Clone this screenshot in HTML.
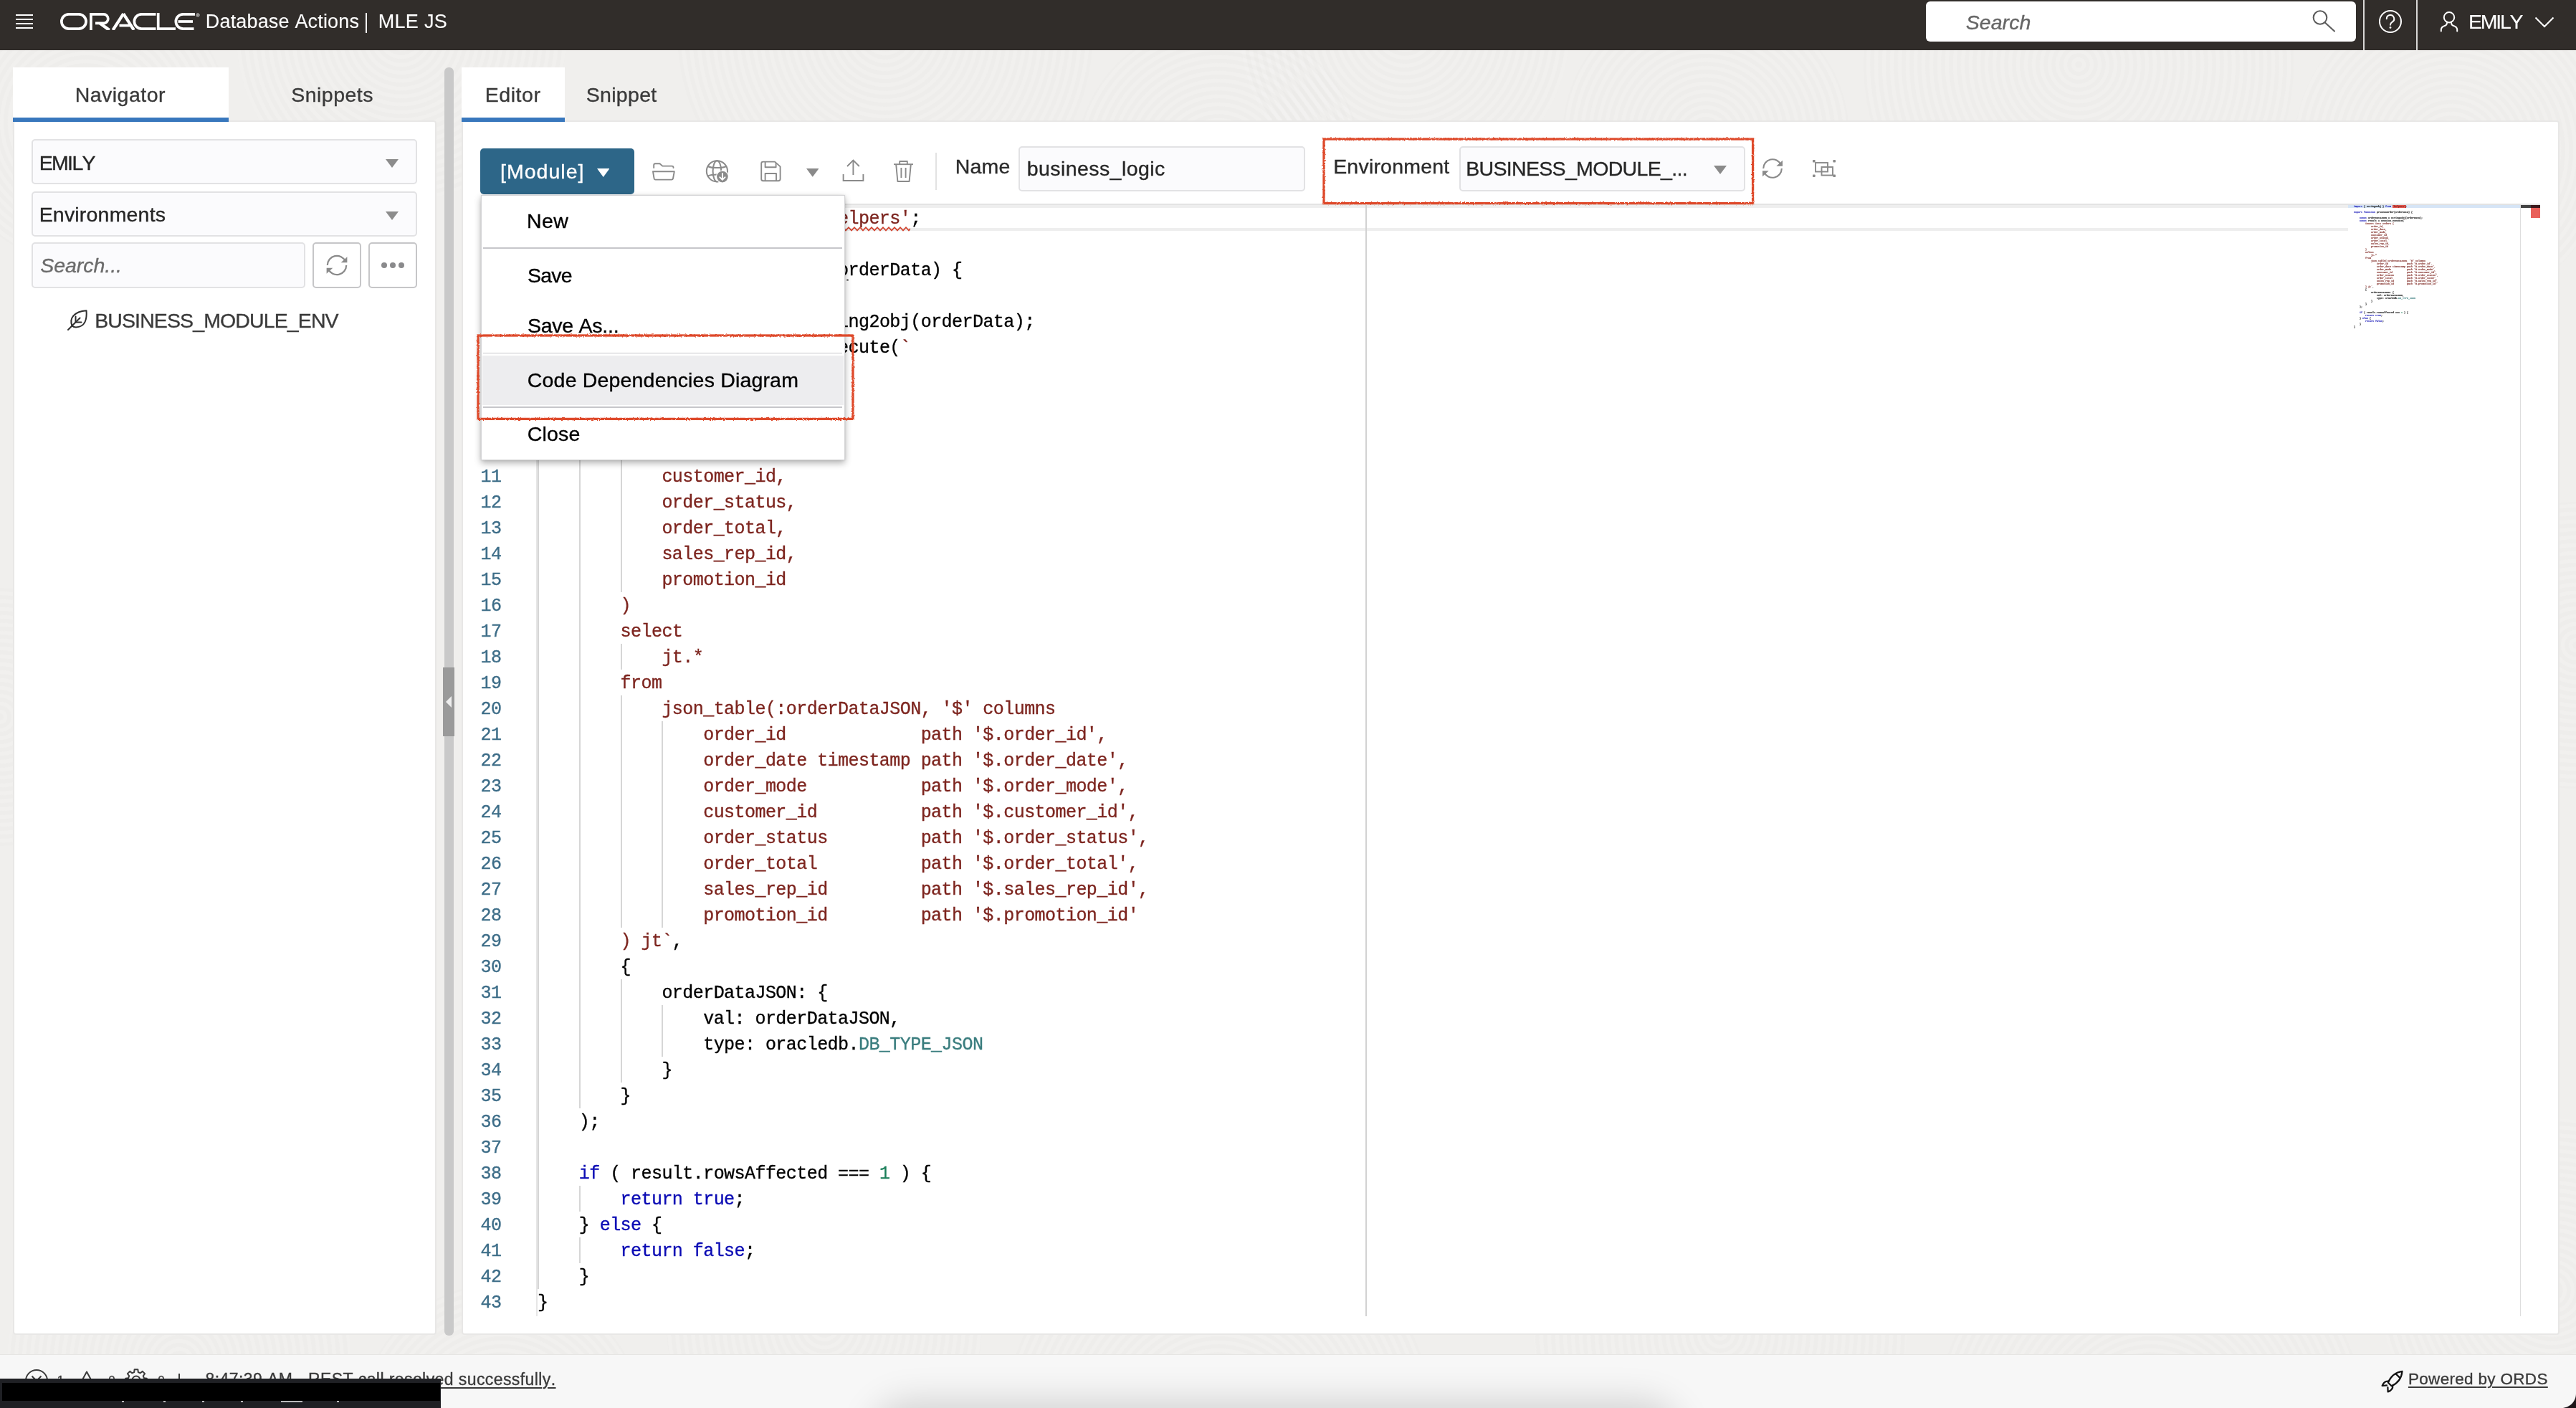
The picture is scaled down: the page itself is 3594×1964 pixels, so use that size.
<!DOCTYPE html>
<html lang="en"><head><meta charset="utf-8"><title>Database Actions | MLE JS</title>
<style>
html,body{margin:0;padding:0;}
body{width:3594px;height:1964px;overflow:hidden;background:#f0efed;font-family:"Liberation Sans",sans-serif;font-kerning:none;position:relative;}
.ring{position:absolute;border-radius:50%;background:repeating-radial-gradient(circle at center, rgba(0,0,0,0.009) 0 4px, rgba(255,255,255,0.085) 5.5px 9.5px, rgba(0,0,0,0.009) 11px);}
#app{position:absolute;left:0;top:0;width:3594px;height:1964px;will-change:transform;}
@media (max-width:1900px){body{width:1797px;height:982px;}#app{transform-origin:0 0;transform:scale(0.5);}}
.b{position:absolute;box-sizing:border-box;display:block;}
.t{position:absolute;white-space:pre;font-family:"Liberation Sans",sans-serif;-webkit-text-stroke:0.35px currentColor;}
</style></head>
<body>
<div id="app">
<div id="tex" style="position:absolute;left:0;top:0;width:3594px;height:1964px;overflow:hidden"><div class="ring" style="left:-80px;top:-30px;width:400px;height:400px"></div><div class="ring" style="left:330px;top:-180px;width:460px;height:460px"></div><div class="ring" style="left:945px;top:-245px;width:580px;height:580px"></div><div class="ring" style="left:1500px;top:30px;width:400px;height:400px"></div><div class="ring" style="left:1730px;top:-190px;width:460px;height:460px"></div><div class="ring" style="left:2180px;top:-10px;width:400px;height:400px"></div><div class="ring" style="left:2600px;top:-210px;width:600px;height:600px"></div><div class="ring" style="left:3200px;top:-10px;width:440px;height:440px"></div><div class="ring" style="left:10px;top:1660px;width:480px;height:480px"></div><div class="ring" style="left:500px;top:1790px;width:400px;height:400px"></div><div class="ring" style="left:930px;top:1630px;width:440px;height:440px"></div><div class="ring" style="left:1400px;top:1690px;width:600px;height:600px"></div><div class="ring" style="left:2140px;top:1600px;width:520px;height:520px"></div><div class="ring" style="left:2700px;top:1690px;width:600px;height:600px"></div><div class="ring" style="left:3320px;top:1560px;width:480px;height:480px"></div><div class="ring" style="left:3394px;top:700px;width:400px;height:400px"></div><div class="ring" style="left:-180px;top:820px;width:360px;height:360px"></div></div>
<!-- part_header -->
<div class="b " style="left:0.00px;top:0.00px;width:3594.00px;height:69.50px;background:#312d2a;"></div>
<div class="b " style="left:22.00px;top:20.10px;width:24.00px;height:1.80px;background:#fff;"></div>
<div class="b " style="left:22.00px;top:26.10px;width:24.00px;height:1.80px;background:#fff;"></div>
<div class="b " style="left:22.00px;top:32.10px;width:24.00px;height:1.80px;background:#fff;"></div>
<div class="b " style="left:22.00px;top:38.10px;width:24.00px;height:1.80px;background:#fff;"></div>
<svg class="b" style="left:84.00px;top:17.50px;" width="188" height="24" viewBox="0 0 188 24">
<g fill="none" stroke="#fff" stroke-width="3.7" stroke-linejoin="miter" stroke-linecap="butt">
<rect x="1.85" y="1.85" width="34.2" height="20.3" rx="10.15"/>
<path d="M42.9 24 V1.85 H60.5 a6.3 6.3 0 0 1 0 12.6 H49"/>
<path d="M55.5 14.4 L68.6 24" stroke-width="4.4"/>
<path d="M73.5 24 L88.2 1.2" stroke-width="4.2"/>
<path d="M88.2 1.2 L102.8 24" stroke-width="4.2"/>
<path d="M82.5 17.6 H97" />
<path d="M133.5 1.85 H113.5 a10.15 10.15 0 0 0 0 20.3 H133.5"/>
<path d="M136.7 0 V22.15 H161"/>
<path d="M188 1.85 H171.5 a10.15 10.15 0 0 0 0 20.3 H186.5"/>
<path d="M164.5 12 H185"/>
</g></svg>
<svg class="b" style="left:272.50px;top:17.50px;" width="6" height="6" viewBox="0 0 6 6"><circle cx="3" cy="3" r="2.2" fill="none" stroke="#fff" stroke-width="0.7"/><path d="M2.2 4.2V1.8h1a.7.7 0 0 1 0 1.4h-1m1 0l.7 1" fill="none" stroke="#fff" stroke-width="0.5"/></svg>
<span class="t " style="left:286.79px;top:16.64px;font-size:27.00px;line-height:27.00px;color:#fff;letter-spacing:0.171px;-webkit-text-stroke:0.1px #fff;">Database Actions</span>
<div class="b " style="left:510.30px;top:17.50px;width:1.80px;height:28.50px;background:#fff;"></div>
<span class="t " style="left:527.79px;top:16.64px;font-size:27.00px;line-height:27.00px;color:#fff;letter-spacing:0.286px;-webkit-text-stroke:0.1px #fff;">MLE JS</span>
<div class="b " style="left:2687.00px;top:2.00px;width:600.00px;height:56.00px;background:#fff;border-radius:6px;"></div>
<span class="t " style="left:2742.69px;top:17.07px;font-size:28.50px;line-height:28.50px;color:#666;letter-spacing:0.063px;font-style:italic;">Search</span>
<svg class="b" style="left:3222.00px;top:10.00px;" width="40" height="40" viewBox="0 0 40 40"><circle cx="15" cy="14.5" r="9.3" fill="none" stroke="#5c5c5c" stroke-width="2.1"/><path d="M21.8 21.5 L35 33.5" stroke="#5c5c5c" stroke-width="2.1" stroke-linecap="round"/></svg>
<div class="b " style="left:3297.00px;top:0.00px;width:2.00px;height:69.50px;background:#d9d8d6;"></div>
<div class="b " style="left:3371.00px;top:0.00px;width:2.00px;height:69.50px;background:#d9d8d6;"></div>
<svg class="b" style="left:3317.00px;top:12.00px;" width="36" height="36" viewBox="0 0 36 36"><circle cx="18" cy="18" r="15" fill="none" stroke="#fff" stroke-width="2"/><path d="M12.8 14.2 a5.2 5.2 0 1 1 7.6 4.6 c-1.6 1 -2.4 1.9 -2.4 3.9" fill="none" stroke="#fff" stroke-width="2" stroke-linecap="round"/><circle cx="18" cy="26.4" r="1.4" fill="#fff"/></svg>
<svg class="b" style="left:3402.00px;top:14.00px;" width="30" height="32" viewBox="0 0 30 32"><circle cx="15" cy="10.2" r="7.2" fill="none" stroke="#fff" stroke-width="2"/><path d="M3.8 29.5 v-2.2 c0 -3.2 2.4 -4.6 5.6 -5.6 c1.7 -.55 2.6 -1.4 2.6 -3.9 M26.2 29.5 v-2.2 c0 -3.2 -2.4 -4.6 -5.6 -5.6 c-1.7 -.55 -2.6 -1.4 -2.6 -3.9" fill="none" stroke="#fff" stroke-width="2" stroke-linecap="round"/></svg>
<span class="t " style="left:3443.96px;top:16.17px;font-size:28.50px;line-height:28.50px;color:#fff;letter-spacing:-2.216px;-webkit-text-stroke:0.1px #fff;">EMILY</span>
<svg class="b" style="left:3534.00px;top:20.00px;" width="32" height="22" viewBox="0 0 32 22"><path d="M3.5 4.5 L16 17 L28.5 4.5" fill="none" stroke="#fff" stroke-width="2"/></svg>
<!-- part_left -->
<div class="b " style="left:18.00px;top:94.00px;width:301.00px;height:70.00px;background:#fff;"></div>
<span class="t " style="left:104.66px;top:118.37px;font-size:28.50px;line-height:28.50px;color:#3a3a3a;letter-spacing:0.480px;">Navigator</span>
<span class="t " style="left:406.21px;top:118.37px;font-size:28.50px;line-height:28.50px;color:#3a3a3a;letter-spacing:0.488px;">Snippets</span>
<div class="b " style="left:18.00px;top:168.00px;width:591.00px;height:1694.00px;background:#fff;border:2px solid #e8e7e6;border-radius:4px;"></div>
<div class="b " style="left:18.00px;top:164.00px;width:301.00px;height:6.00px;background:#3877bd;"></div>
<div class="b " style="left:44.00px;top:194.00px;width:537.50px;height:63.00px;background:#fbfbfd;border:2px solid #e2e2e4;border-radius:5px;"></div>
<span class="t " style="left:54.66px;top:212.87px;font-size:28.50px;line-height:28.50px;color:#262626;letter-spacing:-1.641px;">EMILY</span>
<svg class="b" style="left:538.00px;top:222.00px;" width="18" height="12" viewBox="0 0 18 12"><path d="M0 0H18 L9 12Z" fill="#8c8c8c"/></svg>
<div class="b " style="left:44.00px;top:266.50px;width:537.50px;height:63.00px;background:#fbfbfd;border:2px solid #e2e2e4;border-radius:5px;"></div>
<span class="t " style="left:54.66px;top:285.37px;font-size:28.50px;line-height:28.50px;color:#262626;letter-spacing:0.193px;">Environments</span>
<svg class="b" style="left:538.00px;top:294.50px;" width="18" height="12" viewBox="0 0 18 12"><path d="M0 0H18 L9 12Z" fill="#8c8c8c"/></svg>
<div class="b " style="left:44.00px;top:337.50px;width:382.00px;height:64.00px;background:#fbfbfd;border:2px solid #e2e2e4;border-radius:5px;"></div>
<span class="t " style="left:56.19px;top:356.37px;font-size:28.50px;line-height:28.50px;color:#6b6b6b;letter-spacing:-0.032px;font-style:italic;">Search...</span>
<div class="b " style="left:436.00px;top:338.00px;width:68.00px;height:63.50px;background:#fff;border:2px solid #c6c6c8;border-radius:5px;"></div>
<svg class="b" style="left:0;top:0;overflow:visible" width="1" height="1"><path d="M456.80 370.00 A13.20 13.20 0 0 1 481.96 364.42" fill="none" stroke="#8a8a8a" stroke-width="2.2"/><path d="M483.20 370.00 A13.20 13.20 0 0 1 458.04 375.58" fill="none" stroke="#8a8a8a" stroke-width="2.2"/><path d="M484.40 358.30 L484.40 366.30 L475.70 366.30 Z" fill="#8a8a8a"/><path d="M455.60 381.70 L455.60 373.70 L464.30 373.70 Z" fill="#8a8a8a"/></svg>
<div class="b " style="left:514.00px;top:338.00px;width:68.00px;height:63.50px;background:#fff;border:2px solid #c6c6c8;border-radius:5px;"></div>
<div class="b " style="left:531.80px;top:365.80px;width:8.40px;height:8.40px;background:#8a8a8c;border-radius:50%;"></div>
<div class="b " style="left:543.80px;top:365.80px;width:8.40px;height:8.40px;background:#8a8a8c;border-radius:50%;"></div>
<div class="b " style="left:555.80px;top:365.80px;width:8.40px;height:8.40px;background:#8a8a8c;border-radius:50%;"></div>
<svg class="b" style="left:93.50px;top:431.50px;" width="30" height="30" viewBox="0 0 30 30"><g fill="none" stroke="#2e2e2e" stroke-width="2" stroke-linecap="round" stroke-linejoin="round">
<path d="M6.5 22.5 C2.5 12 9 2.5 26.5 1.2 C27.5 13 25 24 12 24.5 C9.8 24.5 8 23.8 6.5 22.5 Z"/>
<path d="M1 28 L17.5 11.5"/>
<path d="M11.5 17.5 V9.5"/>
<path d="M11.5 17.5 H19.5"/>
</g></svg>
<span class="t " style="left:132.16px;top:432.87px;font-size:28.50px;line-height:28.50px;color:#3a3a3a;letter-spacing:-0.883px;">BUSINESS_MODULE_ENV</span>
<div class="b " style="left:620.00px;top:94.00px;width:12.50px;height:1769.00px;background:#c9c9c9;border-radius:6px;"></div>
<div class="b " style="left:618.20px;top:931.00px;width:15.80px;height:95.70px;background:#9a9a9a;"></div>
<svg class="b" style="left:622.00px;top:971.00px;" width="8" height="16" viewBox="0 0 8 16"><path d="M8 0 L0 8 L8 16Z" fill="#ededed"/></svg>
<!-- part_editor -->
<div class="b " style="left:644.00px;top:94.00px;width:144.00px;height:70.00px;background:#fff;"></div>
<span class="t " style="left:676.66px;top:118.37px;font-size:28.50px;line-height:28.50px;color:#3a3a3a;letter-spacing:0.572px;">Editor</span>
<span class="t " style="left:817.71px;top:118.37px;font-size:28.50px;line-height:28.50px;color:#3a3a3a;letter-spacing:0.307px;">Snippet</span>
<div class="b " style="left:644.00px;top:168.00px;width:2926.50px;height:1694.00px;background:#fff;border:2px solid #e8e7e6;border-radius:4px;"></div>
<div class="b " style="left:644.00px;top:164.00px;width:144.00px;height:6.00px;background:#3877bd;"></div>
<div class="b " style="left:670.00px;top:207.00px;width:215.00px;height:64.00px;background:#2d6688;border-radius:5px;"></div>
<span class="t " style="left:697.97px;top:224.87px;font-size:28.50px;line-height:28.50px;color:#fff;letter-spacing:1.036px;">[Module]</span>
<svg class="b" style="left:832.50px;top:235.00px;" width="17.5" height="12" viewBox="0 0 17.5 12"><path d="M0 0H17.5 L8.75 12Z" fill="#fff"/></svg>
<svg class="b" style="left:906.00px;top:222.00px;" width="40" height="34" viewBox="0 0 40 34"><g fill="none" stroke="#8a8a8a" stroke-width="1.9" stroke-linejoin="round" stroke-linecap="round"><path d="M6.2 12 V8.2 a2 2 0 0 1 2 -2 H14.5 L18.3 9.6 H31.5 a2 2 0 0 1 2 2 V12"/><path d="M5 17.3 H34.8 L33 27 a2 2 0 0 1 -2 1.6 H8.6 a2 2 0 0 1 -2 -1.6 Z"/></g></svg>
<svg class="b" style="left:982.00px;top:220.00px;" width="38" height="38" viewBox="0 0 38 38"><g fill="none" stroke="#8a8a8a" stroke-width="2">
<circle cx="18.4" cy="18.8" r="14.6"/>
<ellipse cx="18.4" cy="18.8" rx="5.8" ry="14.6"/>
<path d="M5.5 12 C11 14.8 25.5 14.8 31.3 12"/>
<path d="M5.5 25.6 C11 22.8 25.5 22.8 31.3 25.6"/>
</g>
<circle cx="25.9" cy="26.6" r="9" fill="#fff"/>
<circle cx="25.9" cy="26.6" r="7.8" fill="#8a8a8a"/>
<path d="M25.9 22 V30.6 M22.2 27.2 L25.9 30.9 L29.6 27.2" fill="none" stroke="#fff" stroke-width="1.9" stroke-linecap="round" stroke-linejoin="round"/></svg>
<svg class="b" style="left:1060.00px;top:223.00px;" width="31" height="32" viewBox="0 0 31 32"><g fill="none" stroke="#8a8a8a" stroke-width="1.9" stroke-linejoin="round">
<path d="M4.6 2.6 H21 L28.6 9.4 V26.8 a2.4 2.4 0 0 1 -2.4 2.4 H4.6 a2.4 2.4 0 0 1 -2.4 -2.4 V5 a2.4 2.4 0 0 1 2.4 -2.4 Z"/>
<path d="M7.6 2.6 V10.2 H22.6 V4"/>
<path d="M7.6 29 V19 H23 V29"/>
</g></svg>
<svg class="b" style="left:1124.50px;top:235.00px;" width="17.5" height="11.8" viewBox="0 0 17.5 11.8"><path d="M0 0H17.5 L8.75 11.8Z" fill="#8a8a8a"/></svg>
<svg class="b" style="left:1174.00px;top:222.00px;" width="33" height="32" viewBox="0 0 33 32"><g fill="none" stroke="#8a8a8a" stroke-width="1.9"><path d="M16.4 1.6 V22"/><path d="M8 10 L16.4 1.6 L24.8 10"/><path d="M2.6 21 V30 H30.4 V21"/></g></svg>
<svg class="b" style="left:1246.00px;top:223.00px;" width="29" height="32" viewBox="0 0 29 32"><g fill="none" stroke="#8a8a8a" stroke-width="1.9" stroke-linejoin="round"><path d="M1 6.2 H28"/><path d="M9.2 6 V2 H19.8 V6"/><path d="M4.2 6.4 L6.4 30 H22.6 L24.8 6.4"/><path d="M11.4 11 V25 M17.6 11 V25"/></g></svg>
<div class="b " style="left:1305.20px;top:213.00px;width:1.80px;height:52.00px;background:#e2e2e2;"></div>
<span class="t " style="left:1332.66px;top:217.87px;font-size:28.50px;line-height:28.50px;color:#2b2b2b;letter-spacing:0.194px;">Name</span>
<div class="b " style="left:1421.00px;top:203.50px;width:399.50px;height:63.00px;background:#fbfbfd;border:2px solid #e2e2e4;border-radius:5px;"></div>
<span class="t " style="left:1432.66px;top:221.17px;font-size:28.50px;line-height:28.50px;color:#262626;letter-spacing:0.434px;">business_logic</span>
<span class="t " style="left:1860.16px;top:217.87px;font-size:28.50px;line-height:28.50px;color:#2b2b2b;letter-spacing:0.205px;">Environment</span>
<div class="b " style="left:2035.50px;top:203.50px;width:399.50px;height:63.00px;background:#fbfbfd;border:2px solid #e2e2e4;border-radius:5px;"></div>
<span class="t " style="left:2045.16px;top:221.37px;font-size:28.50px;line-height:28.50px;color:#262626;letter-spacing:-0.671px;">BUSINESS_MODULE_...</span>
<svg class="b" style="left:2391.00px;top:231.00px;" width="18" height="12" viewBox="0 0 18 12"><path d="M0 0H18 L9 12Z" fill="#8a8a8a"/></svg>
<svg class="b" style="left:0;top:0;overflow:visible" width="1" height="1"><path d="M2460.20 235.00 A12.80 12.80 0 0 1 2484.60 229.59" fill="none" stroke="#8a8a8a" stroke-width="2.1"/><path d="M2485.80 235.00 A12.80 12.80 0 0 1 2461.40 240.41" fill="none" stroke="#8a8a8a" stroke-width="2.1"/><path d="M2487.00 223.70 L2487.00 231.70 L2478.30 231.70 Z" fill="#8a8a8a"/><path d="M2459.00 246.30 L2459.00 238.30 L2467.70 238.30 Z" fill="#8a8a8a"/></svg>
<svg class="b" style="left:2529.00px;top:223.00px;" width="32" height="24" viewBox="0 0 32 24"><g fill="none" stroke="#8a8a8a" stroke-width="1.9"><rect x="4" y="4" width="17" height="12.5"/><rect x="12.5" y="10" width="15.5" height="11.5"/></g>
<g fill="#8a8a8a"><rect x="0" y="0" width="3.6" height="3.6" rx="0.8"/><rect x="28.4" y="0" width="3.6" height="3.6" rx="0.8"/><rect x="0" y="20.4" width="3.6" height="3.6" rx="0.8"/><rect x="28.4" y="20.4" width="3.6" height="3.6" rx="0.8"/></g></svg>
<!-- part_code -->
<div class="b " style="left:671.00px;top:284.00px;width:2873.00px;height:2.00px;background:#e3e3e3;"></div>
<div class="b " style="left:750.00px;top:286.00px;width:2526.00px;height:4.00px;background:#eeeeee;"></div>
<div class="b " style="left:750.00px;top:318.00px;width:2526.00px;height:4.00px;background:#eeeeee;"></div>
<div class="b " style="left:748.00px;top:286.00px;width:2.00px;height:1550.00px;background:#e6e6e6;"></div>
<div class="b " style="left:1905.40px;top:286.00px;width:2.00px;height:1550.00px;background:#d2d2d2;"></div>
<div class="b " style="left:750.00px;top:430.00px;width:2.00px;height:1368.00px;background:#d6d6d6;"></div>
<div class="b " style="left:807.80px;top:502.00px;width:2.00px;height:1044.00px;background:#d6d6d6;"></div>
<div class="b " style="left:807.80px;top:1654.00px;width:2.00px;height:36.00px;background:#d6d6d6;"></div>
<div class="b " style="left:807.80px;top:1726.00px;width:2.00px;height:36.00px;background:#d6d6d6;"></div>
<div class="b " style="left:865.60px;top:538.00px;width:2.00px;height:288.00px;background:#d6d6d6;"></div>
<div class="b " style="left:865.60px;top:898.00px;width:2.00px;height:36.00px;background:#d6d6d6;"></div>
<div class="b " style="left:865.60px;top:970.00px;width:2.00px;height:324.00px;background:#d6d6d6;"></div>
<div class="b " style="left:865.60px;top:1366.00px;width:2.00px;height:144.00px;background:#d6d6d6;"></div>
<div class="b " style="left:923.40px;top:1006.00px;width:2.00px;height:288.00px;background:#d6d6d6;"></div>
<div class="b " style="left:923.40px;top:1402.00px;width:2.00px;height:72.00px;background:#d6d6d6;"></div>
<style>.c{font-family:"Liberation Mono",monospace;font-size:25.00px;line-height:25.00px;letter-spacing:-0.5524px;color:#000;}</style>
<span class="t c" style="left:684.95px;top:292.75px;color:#3d6d88;">1</span>
<span class="t c" style="left:750.00px;top:292.75px;"><span style="color:#0b0bb4">import</span> { string2obj } <span style="color:#0b0bb4">from</span> <span style="color:#7d251f">&#x27;helpers&#x27;</span>;</span>
<span class="t c" style="left:684.95px;top:328.75px;color:#3d6d88;">2</span>
<span class="t c" style="left:684.95px;top:364.75px;color:#3d6d88;">3</span>
<span class="t c" style="left:750.00px;top:364.75px;"><span style="color:#0b0bb4">export</span> <span style="color:#0b0bb4">function</span> processOrder(orderData) {</span>
<span class="t c" style="left:684.95px;top:400.75px;color:#3d6d88;">4</span>
<span class="t c" style="left:684.95px;top:436.75px;color:#3d6d88;">5</span>
<span class="t c" style="left:750.00px;top:436.75px;">    <span style="color:#0b0bb4">const</span> orderDataJSON = string2obj(orderData);</span>
<span class="t c" style="left:684.95px;top:472.75px;color:#3d6d88;">6</span>
<span class="t c" style="left:750.00px;top:472.75px;">    <span style="color:#0b0bb4">const</span> result = session.execute(<span style="color:#7d251f">`</span></span>
<span class="t c" style="left:684.95px;top:508.75px;color:#3d6d88;">7</span>
<span class="t c" style="left:750.00px;top:508.75px;"><span style="color:#7d251f">        insert into orders (</span></span>
<span class="t c" style="left:684.95px;top:544.75px;color:#3d6d88;">8</span>
<span class="t c" style="left:750.00px;top:544.75px;"><span style="color:#7d251f">            order_id,</span></span>
<span class="t c" style="left:684.95px;top:580.75px;color:#3d6d88;">9</span>
<span class="t c" style="left:750.00px;top:580.75px;"><span style="color:#7d251f">            order_date,</span></span>
<span class="t c" style="left:670.50px;top:616.75px;color:#3d6d88;">10</span>
<span class="t c" style="left:750.00px;top:616.75px;"><span style="color:#7d251f">            order_mode,</span></span>
<span class="t c" style="left:670.50px;top:652.75px;color:#3d6d88;">11</span>
<span class="t c" style="left:750.00px;top:652.75px;"><span style="color:#7d251f">            customer_id,</span></span>
<span class="t c" style="left:670.50px;top:688.75px;color:#3d6d88;">12</span>
<span class="t c" style="left:750.00px;top:688.75px;"><span style="color:#7d251f">            order_status,</span></span>
<span class="t c" style="left:670.50px;top:724.75px;color:#3d6d88;">13</span>
<span class="t c" style="left:750.00px;top:724.75px;"><span style="color:#7d251f">            order_total,</span></span>
<span class="t c" style="left:670.50px;top:760.75px;color:#3d6d88;">14</span>
<span class="t c" style="left:750.00px;top:760.75px;"><span style="color:#7d251f">            sales_rep_id,</span></span>
<span class="t c" style="left:670.50px;top:796.75px;color:#3d6d88;">15</span>
<span class="t c" style="left:750.00px;top:796.75px;"><span style="color:#7d251f">            promotion_id</span></span>
<span class="t c" style="left:670.50px;top:832.75px;color:#3d6d88;">16</span>
<span class="t c" style="left:750.00px;top:832.75px;"><span style="color:#7d251f">        )</span></span>
<span class="t c" style="left:670.50px;top:868.75px;color:#3d6d88;">17</span>
<span class="t c" style="left:750.00px;top:868.75px;"><span style="color:#7d251f">        select</span></span>
<span class="t c" style="left:670.50px;top:904.75px;color:#3d6d88;">18</span>
<span class="t c" style="left:750.00px;top:904.75px;"><span style="color:#7d251f">            jt.*</span></span>
<span class="t c" style="left:670.50px;top:940.75px;color:#3d6d88;">19</span>
<span class="t c" style="left:750.00px;top:940.75px;"><span style="color:#7d251f">        from</span></span>
<span class="t c" style="left:670.50px;top:976.75px;color:#3d6d88;">20</span>
<span class="t c" style="left:750.00px;top:976.75px;"><span style="color:#7d251f">            json_table(:orderDataJSON, &#x27;$&#x27; columns</span></span>
<span class="t c" style="left:670.50px;top:1012.75px;color:#3d6d88;">21</span>
<span class="t c" style="left:750.00px;top:1012.75px;"><span style="color:#7d251f">                order_id             path &#x27;$.order_id&#x27;,</span></span>
<span class="t c" style="left:670.50px;top:1048.75px;color:#3d6d88;">22</span>
<span class="t c" style="left:750.00px;top:1048.75px;"><span style="color:#7d251f">                order_date timestamp path &#x27;$.order_date&#x27;,</span></span>
<span class="t c" style="left:670.50px;top:1084.75px;color:#3d6d88;">23</span>
<span class="t c" style="left:750.00px;top:1084.75px;"><span style="color:#7d251f">                order_mode           path &#x27;$.order_mode&#x27;,</span></span>
<span class="t c" style="left:670.50px;top:1120.75px;color:#3d6d88;">24</span>
<span class="t c" style="left:750.00px;top:1120.75px;"><span style="color:#7d251f">                customer_id          path &#x27;$.customer_id&#x27;,</span></span>
<span class="t c" style="left:670.50px;top:1156.75px;color:#3d6d88;">25</span>
<span class="t c" style="left:750.00px;top:1156.75px;"><span style="color:#7d251f">                order_status         path &#x27;$.order_status&#x27;,</span></span>
<span class="t c" style="left:670.50px;top:1192.75px;color:#3d6d88;">26</span>
<span class="t c" style="left:750.00px;top:1192.75px;"><span style="color:#7d251f">                order_total          path &#x27;$.order_total&#x27;,</span></span>
<span class="t c" style="left:670.50px;top:1228.75px;color:#3d6d88;">27</span>
<span class="t c" style="left:750.00px;top:1228.75px;"><span style="color:#7d251f">                sales_rep_id         path &#x27;$.sales_rep_id&#x27;,</span></span>
<span class="t c" style="left:670.50px;top:1264.75px;color:#3d6d88;">28</span>
<span class="t c" style="left:750.00px;top:1264.75px;"><span style="color:#7d251f">                promotion_id         path &#x27;$.promotion_id&#x27;</span></span>
<span class="t c" style="left:670.50px;top:1300.75px;color:#3d6d88;">29</span>
<span class="t c" style="left:750.00px;top:1300.75px;"><span style="color:#7d251f">        ) jt`</span>,</span>
<span class="t c" style="left:670.50px;top:1336.75px;color:#3d6d88;">30</span>
<span class="t c" style="left:750.00px;top:1336.75px;">        {</span>
<span class="t c" style="left:670.50px;top:1372.75px;color:#3d6d88;">31</span>
<span class="t c" style="left:750.00px;top:1372.75px;">            orderDataJSON: {</span>
<span class="t c" style="left:670.50px;top:1408.75px;color:#3d6d88;">32</span>
<span class="t c" style="left:750.00px;top:1408.75px;">                val: orderDataJSON,</span>
<span class="t c" style="left:670.50px;top:1444.75px;color:#3d6d88;">33</span>
<span class="t c" style="left:750.00px;top:1444.75px;">                type: oracledb.<span style="color:#3a7d7e">DB_TYPE_JSON</span></span>
<span class="t c" style="left:670.50px;top:1480.75px;color:#3d6d88;">34</span>
<span class="t c" style="left:750.00px;top:1480.75px;">            }</span>
<span class="t c" style="left:670.50px;top:1516.75px;color:#3d6d88;">35</span>
<span class="t c" style="left:750.00px;top:1516.75px;">        }</span>
<span class="t c" style="left:670.50px;top:1552.75px;color:#3d6d88;">36</span>
<span class="t c" style="left:750.00px;top:1552.75px;">    );</span>
<span class="t c" style="left:670.50px;top:1588.75px;color:#3d6d88;">37</span>
<span class="t c" style="left:670.50px;top:1624.75px;color:#3d6d88;">38</span>
<span class="t c" style="left:750.00px;top:1624.75px;">    <span style="color:#0b0bb4">if</span> ( result.rowsAffected === <span style="color:#1b7f5a">1</span> ) {</span>
<span class="t c" style="left:670.50px;top:1660.75px;color:#3d6d88;">39</span>
<span class="t c" style="left:750.00px;top:1660.75px;">        <span style="color:#0b0bb4">return</span> <span style="color:#0b0bb4">true</span>;</span>
<span class="t c" style="left:670.50px;top:1696.75px;color:#3d6d88;">40</span>
<span class="t c" style="left:750.00px;top:1696.75px;">    } <span style="color:#0b0bb4">else</span> {</span>
<span class="t c" style="left:670.50px;top:1732.75px;color:#3d6d88;">41</span>
<span class="t c" style="left:750.00px;top:1732.75px;">        <span style="color:#0b0bb4">return</span> <span style="color:#0b0bb4">false</span>;</span>
<span class="t c" style="left:670.50px;top:1768.75px;color:#3d6d88;">42</span>
<span class="t c" style="left:750.00px;top:1768.75px;">    }</span>
<span class="t c" style="left:670.50px;top:1804.75px;color:#3d6d88;">43</span>
<span class="t c" style="left:750.00px;top:1804.75px;">}</span>
<svg class="b" style="left:1140.15px;top:315.50px;" width="130.05" height="7" viewBox="0 0 130.05 7"><path d="M0 5.5 L4.0 1.2 L8.0 5.5 L12.0 1.2 L16.0 5.5 L20.0 1.2 L24.0 5.5 L28.0 1.2 L32.0 5.5 L36.0 1.2 L40.0 5.5 L44.0 1.2 L48.0 5.5 L52.0 1.2 L56.0 5.5 L60.0 1.2 L64.0 5.5 L68.0 1.2 L72.0 5.5 L76.0 1.2 L80.0 5.5 L84.0 1.2 L88.0 5.5 L92.0 1.2 L96.0 5.5 L100.0 1.2 L104.0 5.5 L108.0 1.2 L112.0 5.5 L116.0 1.2 L120.0 5.5 L124.0 1.2 L128.0 5.5 L132.0 1.2" fill="none" stroke="#d1402c" stroke-width="1.7"/></svg>
<div class="b " style="left:1169.40px;top:388.60px;width:3.20px;height:3.20px;background:#7a7a7a;border-radius:50%;"></div>
<div class="b " style="left:1175.30px;top:388.60px;width:3.20px;height:3.20px;background:#7a7a7a;border-radius:50%;"></div>
<div class="b " style="left:1181.20px;top:388.60px;width:3.20px;height:3.20px;background:#7a7a7a;border-radius:50%;"></div>
<div class="b " style="left:3276.00px;top:286.00px;width:240.50px;height:4.00px;background:#d6e5f6;"></div>
<div class="b " style="left:3338.00px;top:286.40px;width:18.50px;height:3.40px;background:#e4574f;"></div>
<div class="b" style="left:3284.0px;top:286.0px;width:1700px;transform-origin:0 0;transform:scale(0.13889);font-family:'Liberation Mono',monospace;font-weight:bold;font-size:24px;line-height:28.8px;white-space:pre;color:#000;-webkit-text-stroke:1.4px currentColor;opacity:0.8;"><div style="height:28.8px"><span style="color:#0b0bb4">import</span> { string2obj } <span style="color:#0b0bb4">from</span> <span style="color:#7d251f">&#x27;helpers&#x27;</span>;</div><div style="height:28.8px"></div><div style="height:28.8px"><span style="color:#0b0bb4">export</span> <span style="color:#0b0bb4">function</span> processOrder(orderData) {</div><div style="height:28.8px"></div><div style="height:28.8px">    <span style="color:#0b0bb4">const</span> orderDataJSON = string2obj(orderData);</div><div style="height:28.8px">    <span style="color:#0b0bb4">const</span> result = session.execute(<span style="color:#7d251f">`</span></div><div style="height:28.8px"><span style="color:#7d251f">        insert into orders (</span></div><div style="height:28.8px"><span style="color:#7d251f">            order_id,</span></div><div style="height:28.8px"><span style="color:#7d251f">            order_date,</span></div><div style="height:28.8px"><span style="color:#7d251f">            order_mode,</span></div><div style="height:28.8px"><span style="color:#7d251f">            customer_id,</span></div><div style="height:28.8px"><span style="color:#7d251f">            order_status,</span></div><div style="height:28.8px"><span style="color:#7d251f">            order_total,</span></div><div style="height:28.8px"><span style="color:#7d251f">            sales_rep_id,</span></div><div style="height:28.8px"><span style="color:#7d251f">            promotion_id</span></div><div style="height:28.8px"><span style="color:#7d251f">        )</span></div><div style="height:28.8px"><span style="color:#7d251f">        select</span></div><div style="height:28.8px"><span style="color:#7d251f">            jt.*</span></div><div style="height:28.8px"><span style="color:#7d251f">        from</span></div><div style="height:28.8px"><span style="color:#7d251f">            json_table(:orderDataJSON, &#x27;$&#x27; columns</span></div><div style="height:28.8px"><span style="color:#7d251f">                order_id             path &#x27;$.order_id&#x27;,</span></div><div style="height:28.8px"><span style="color:#7d251f">                order_date timestamp path &#x27;$.order_date&#x27;,</span></div><div style="height:28.8px"><span style="color:#7d251f">                order_mode           path &#x27;$.order_mode&#x27;,</span></div><div style="height:28.8px"><span style="color:#7d251f">                customer_id          path &#x27;$.customer_id&#x27;,</span></div><div style="height:28.8px"><span style="color:#7d251f">                order_status         path &#x27;$.order_status&#x27;,</span></div><div style="height:28.8px"><span style="color:#7d251f">                order_total          path &#x27;$.order_total&#x27;,</span></div><div style="height:28.8px"><span style="color:#7d251f">                sales_rep_id         path &#x27;$.sales_rep_id&#x27;,</span></div><div style="height:28.8px"><span style="color:#7d251f">                promotion_id         path &#x27;$.promotion_id&#x27;</span></div><div style="height:28.8px"><span style="color:#7d251f">        ) jt`</span>,</div><div style="height:28.8px">        {</div><div style="height:28.8px">            orderDataJSON: {</div><div style="height:28.8px">                val: orderDataJSON,</div><div style="height:28.8px">                type: oracledb.<span style="color:#3a7d7e">DB_TYPE_JSON</span></div><div style="height:28.8px">            }</div><div style="height:28.8px">        }</div><div style="height:28.8px">    );</div><div style="height:28.8px"></div><div style="height:28.8px">    <span style="color:#0b0bb4">if</span> ( result.rowsAffected === <span style="color:#1b7f5a">1</span> ) {</div><div style="height:28.8px">        <span style="color:#0b0bb4">return</span> <span style="color:#0b0bb4">true</span>;</div><div style="height:28.8px">    } <span style="color:#0b0bb4">else</span> {</div><div style="height:28.8px">        <span style="color:#0b0bb4">return</span> <span style="color:#0b0bb4">false</span>;</div><div style="height:28.8px">    }</div><div style="height:28.8px">}</div></div>
<div class="b " style="left:3516.00px;top:286.00px;width:1.20px;height:1550.00px;background:#dedede;"></div>
<div class="b " style="left:3517.20px;top:286.00px;width:26.80px;height:4.00px;background:#424242;"></div>
<div class="b " style="left:3530.50px;top:290.00px;width:13.50px;height:14.00px;background:#e9605a;"></div>
<div class="b " style="left:3530.50px;top:286.00px;width:13.50px;height:4.00px;background:#3b181c;"></div>
<!-- part_menu -->
<div class="b " style="left:671.00px;top:272.00px;width:507.50px;height:369.50px;background:#fff;border:1.5px solid #d4d4d6;box-shadow:0 4px 9px rgba(0,0,0,0.30), 0 0 3px rgba(0,0,0,0.12);"></div>
<div class="b " style="left:672.50px;top:495.50px;width:504.50px;height:69.50px;background:#ededef;"></div>
<div class="b " style="left:674.00px;top:345.10px;width:501.00px;height:1.80px;background:#c6c6ca;"></div>
<div class="b " style="left:674.00px;top:491.60px;width:501.00px;height:1.80px;background:#c6c6ca;"></div>
<div class="b " style="left:674.00px;top:567.10px;width:501.00px;height:1.80px;background:#c6c6ca;"></div>
<span class="t " style="left:734.96px;top:293.87px;font-size:28.50px;line-height:28.50px;color:#000;letter-spacing:0.477px;">New</span>
<span class="t " style="left:736.01px;top:369.67px;font-size:28.50px;line-height:28.50px;color:#000;letter-spacing:-0.800px;">Save</span>
<span class="t " style="left:736.01px;top:439.87px;font-size:28.50px;line-height:28.50px;color:#000;letter-spacing:-0.255px;">Save As...</span>
<span class="t " style="left:735.85px;top:515.87px;font-size:28.50px;line-height:28.50px;color:#000;letter-spacing:0.173px;">Code Dependencies Diagram</span>
<span class="t " style="left:735.85px;top:591.37px;font-size:28.50px;line-height:28.50px;color:#000;letter-spacing:0.137px;">Close</span>
<svg class="b" style="left:661.30px;top:461.80px;" width="535" height="128.4" viewBox="0 0 535 128.4"><filter id="rr1" x="-5%" y="-5%" width="110%" height="110%"><feTurbulence type="fractalNoise" baseFrequency="0.45" numOctaves="2" seed="2" result="n"/><feDisplacementMap in="SourceGraphic" in2="n" scale="3" xChannelSelector="R" yChannelSelector="G"/></filter><rect x="6" y="6" width="523.0" height="116.4" fill="none" stroke="#de4a2b" stroke-width="3.3" filter="url(#rr1)"/></svg>
<svg class="b" style="left:1840.70px;top:187.70px;" width="610.6" height="101.6" viewBox="0 0 610.6 101.6"><filter id="rr2" x="-5%" y="-5%" width="110%" height="110%"><feTurbulence type="fractalNoise" baseFrequency="0.45" numOctaves="2" seed="5" result="n"/><feDisplacementMap in="SourceGraphic" in2="n" scale="3" xChannelSelector="R" yChannelSelector="G"/></filter><rect x="6" y="6" width="598.6" height="89.6" fill="none" stroke="#de4a2b" stroke-width="3.3" filter="url(#rr2)"/></svg>
<!-- part_status -->
<div class="b " style="left:0.00px;top:1889.00px;width:3594.00px;height:75.00px;background:#f7f7f7;border-top:1.5px solid #e6e5e3;"></div>
<div class="b " style="left:1240.00px;top:1978.00px;width:1080.00px;height:80.00px;background:#bbb;border-radius:30px;box-shadow:0 0 50px 24px rgba(0,0,0,0.15);"></div>
<svg class="b" style="left:34.00px;top:1909.00px;" width="34" height="34" viewBox="0 0 34 34"><circle cx="17" cy="17" r="15" fill="none" stroke="#3a3a3a" stroke-width="2"/><path d="M10.5 10.5 L23.5 23.5 M23.5 10.5 L10.5 23.5" stroke="#3a3a3a" stroke-width="2"/></svg>
<svg class="b" style="left:103.60px;top:1909.50px;" width="34" height="34" viewBox="0 0 34 34"><path d="M17 3.5 L32 31 H2 Z" fill="none" stroke="#3a3a3a" stroke-width="2" stroke-linejoin="round"/></svg>
<svg class="b" style="left:173.00px;top:1908.00px;" width="34" height="34" viewBox="0 0 34 34"><path d="M14.65 2.18 L19.35 2.18 L19.81 6.06 L22.75 7.27 L25.82 4.86 L29.14 8.18 L26.73 11.25 L27.94 14.19 L31.82 14.65 L31.82 19.35 L27.94 19.81 L26.73 22.75 L29.14 25.82 L25.82 29.14 L22.75 26.73 L19.81 27.94 L19.35 31.82 L14.65 31.82 L14.19 27.94 L11.25 26.73 L8.18 29.14 L4.86 25.82 L7.27 22.75 L6.06 19.81 L2.18 19.35 L2.18 14.65 L6.06 14.19 L7.27 11.25 L4.86 8.18 L8.18 4.86 L11.25 7.27 L14.19 6.06 Z" fill="none" stroke="#3a3a3a" stroke-width="2" stroke-linejoin="round"/><circle cx="17" cy="17" r="5.5" fill="none" stroke="#3a3a3a" stroke-width="2"/></svg>
<span class="t " style="left:286.50px;top:1913.33px;font-size:23.00px;line-height:23.00px;color:#3a3a3a;letter-spacing:0.414px;text-decoration:underline;text-decoration-thickness:2px;text-underline-offset:3px;">8:47:39 AM - REST call resolved successfully.</span>
<div class="b " style="left:248.80px;top:1916.00px;width:2.10px;height:22.00px;background:#3a3a3a;"></div>
<span class="t " style="left:79.71px;top:1917.11px;font-size:17.00px;line-height:17.00px;color:#3a3a3a;">1</span>
<span class="t " style="left:151.34px;top:1917.11px;font-size:17.00px;line-height:17.00px;color:#3a3a3a;">0</span>
<span class="t " style="left:220.34px;top:1917.11px;font-size:17.00px;line-height:17.00px;color:#3a3a3a;">0</span>
<div class="b " style="left:0.00px;top:1923.00px;width:615.00px;height:41.00px;background:#1f2024;"></div>
<div class="b " style="left:2.50px;top:1929.00px;width:611.50px;height:24.50px;background:#000;"></div>
<div class="b " style="left:170.00px;top:1953.50px;width:3.00px;height:2.50px;background:#b9b9bb;"></div>
<div class="b " style="left:228.00px;top:1953.50px;width:3.00px;height:2.50px;background:#b9b9bb;"></div>
<div class="b " style="left:282.00px;top:1953.50px;width:3.00px;height:2.50px;background:#b9b9bb;"></div>
<div class="b " style="left:336.00px;top:1953.50px;width:3.00px;height:2.50px;background:#b9b9bb;"></div>
<div class="b " style="left:392.00px;top:1953.50px;width:30.00px;height:2.50px;background:#b9b9bb;"></div>
<div class="b " style="left:470.00px;top:1953.50px;width:3.00px;height:2.50px;background:#b9b9bb;"></div>
<svg class="b" style="left:3321.50px;top:1910.50px;" width="32" height="32" viewBox="0 0 32 32"><g fill="none" stroke="#111" stroke-width="2.2" stroke-linejoin="round" stroke-linecap="round">
<path d="M29.5 1.8 C20 3 13.5 9 9.8 17.5 L14.6 22.3 C23 18.5 28.6 12 29.5 1.8 Z"/>
<path d="M20.5 5.2 L25.8 10.4"/>
<path d="M10.6 15.8 C6.5 15.2 3.4 17.6 1.6 22 L8 21.4"/>
<path d="M16.2 21.6 C16.8 25.6 14.4 28.6 9.6 30.4 L9.4 24.2"/>
</g></svg>
<span class="t " style="left:3359.95px;top:1912.95px;font-size:22.50px;line-height:22.50px;color:#3a3a3a;letter-spacing:0.315px;text-decoration:underline;text-decoration-thickness:2px;text-underline-offset:3px;">Powered by ORDS</span>
<svg class="b" style="left:3574.00px;top:1944.00px;" width="20" height="20" viewBox="0 0 20 20"><path d="M20 0 V20 H0 C11 20 20 11 20 0 Z" fill="#1c1518"/></svg>
</div>
<script>(function(){var w=window.innerWidth||3594;if(Math.abs(w-3594)>2&&Math.abs(w-1797)>2){var s=w/3594,a=document.getElementById("app");a.style.transformOrigin="0 0";a.style.transform="scale("+s+")";document.body.style.width=(3594*s)+"px";document.body.style.height=(1964*s)+"px";}})();</script>
</body></html>
